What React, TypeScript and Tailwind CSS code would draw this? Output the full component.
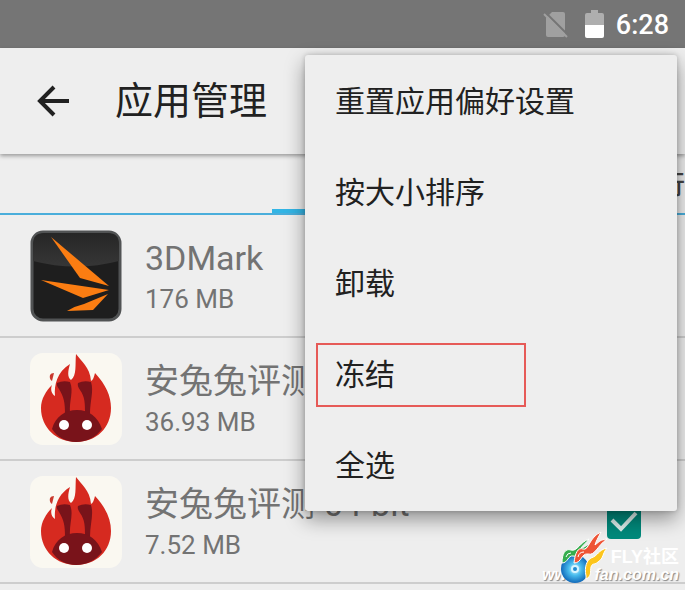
import React, { useState } from 'react';

const apps = [
  { id: 1, name: '3DMark', size: '176 MB', icon: '3dmark' },
  { id: 2, name: '安兔兔评测', size: '36.93 MB', icon: 'antutu' },
  { id: 3, name: '安兔兔评测 64-bit', size: '7.52 MB', icon: 'antutu' },
];

const menuItems = ['重置应用偏好设置', '按大小排序', '卸载', '冻结', '全选'];

function MarkIcon() {
  return (
    <svg className="size-[92px] shrink-0" viewBox="0 0 92 92" aria-hidden="true">
      <defs>
        <linearGradient id="markTop" x1="0" y1="0" x2="0" y2="1">
          <stop offset="0" stopColor="#262626" />
          <stop offset="1" stopColor="#363636" />
        </linearGradient>
      </defs>
      <rect x="2" y="2" width="88" height="88" rx="11" fill="#1e1e1e" stroke="#515354" strokeWidth="3" />
      <path d="M3 31V14Q3 3 14 3H78Q89 3 89 14V31Q46 42 3 31Z" fill="url(#markTop)" />
      <path d="M21 7L79 56L50 48Z" fill="#fb7d12" />
      <path d="M11 50L79 60L53 68Z" fill="#fb7d12" />
      <path d="M78 64L63 80L37 81Q45 76 54 74Z" fill="#fb7d12" />
    </svg>
  );
}

function AntutuIcon() {
  return (
    <svg className="size-[92px] shrink-0" viewBox="0 0 92 92" aria-hidden="true">
      <rect width="92" height="92" rx="13" fill="#faf8f1" />
      <path
        d="M46 1C51 8 60 14 61 28C63 27 64 24 65 20C76 32 81 43 81 55C81 75 66 89 46 89C27 89 11 75 11 55C11 46 16 38 22 32C20 37 22 41 25 43C24 32 27 19 40 11C38 18 37 24 41 27C47 22 45 12 46 1Z"
        fill="#d62a20"
      />
      <path d="M20 22Q21 20 24 20L22 28Q19 26 20 22Z" fill="#c9392e" />
      <path d="M27 30Q33 27 40 29C44 38 39 48 40 60H35C35 50 34 44 29 36Q26 32 27 30Z" fill="#79131a" />
      <path d="M48 30Q54 27 61 29C64 38 60 48 60 61H55C55 50 55 44 50 37Q47 33 48 30Z" fill="#79131a" />
      <path d="M22 76C25 64 35 57 47 57C59 57 68 64 72 76C66 84 57 89 46 89C36 89 27 84 22 76Z" fill="#79131a" />
      <circle cx="34" cy="72" r="5" fill="#fff" />
      <circle cx="57" cy="72" r="5" fill="#fff" />
    </svg>
  );
}

function StatusBar() {
  return (
    <div className="flex h-12 items-center justify-end bg-[#757575] pr-4 text-white">
      <svg className="mr-4 h-[30px] w-[26px]" viewBox="0 0 26 30" aria-hidden="true">
        <path d="M9 3H20Q22 3 22 5V26Q22 28 20 28H5Q3 28 3 26V9Z" fill="#a0a0a0" />
        <path d="M2 3L26 27" stroke="#757575" strokeWidth="2" />
        <path d="M1 5L24 28" stroke="#a0a0a0" strokeWidth="2" />
      </svg>
      <svg className="mr-3 h-7 w-[19px]" viewBox="0 0 19 28" aria-hidden="true">
        <path d="M6 0H13V3H17Q19 3 19 5V15H0V5Q0 3 2 3H6Z" fill="#aeaeae" />
        <path d="M0 15H19V26Q19 28 17 28H2Q0 28 0 26Z" fill="#fff" />
      </svg>
      <span className="pt-[2px] text-[27px] leading-8 font-medium">6:28</span>
    </div>
  );
}

function Watermark() {
  return (
    <div className="pointer-events-none absolute top-[532px] right-[6px] h-[53px] w-[137px] text-white">
      <div className="flex h-full flex-col items-end justify-end font-['Liberation_Sans','Noto_Sans_CJK_SC',sans-serif] font-bold">
        <div className="text-[18px] leading-4">FLY社区</div>
        <div className="flex w-full justify-between text-[16px] leading-5 italic [text-shadow:1px_1px_1px_#888]">
          <span>www.</span>
          <span>fan.com.cn</span>
        </div>
      </div>
      <svg className="absolute top-0 left-[18px] h-[54px] w-12" viewBox="0 0 48 54" aria-hidden="true">
        <defs>
          <radialGradient id="disc">
            <stop offset="0" stopColor="#e8fbff" />
            <stop offset="0.45" stopColor="#49bdee" />
            <stop offset="1" stopColor="#126aba" />
          </radialGradient>
        </defs>
        <circle cx="15" cy="37" r="14" fill="url(#disc)" />
        <path d="M2 31C2 22 5 16 11 18C17 20 20 10 29 7C26 11 23 13 21 16C26 15 27 12 33 11C22 17 20 26 13 24C8 23 8 31 2 31Z" fill="#35ad4e" stroke="#fff" />
        <path d="M26 44C24 35 27 28 31 26C38 24 38 18 47 16C42 22 44 26 38 30C33 34 33 30 31 35C30 40 32 44 26 47Z" fill="#fcc51c" stroke="#fff" />
        <path d="M14 31C15 21 18 15 23 17C29 19 29 5 41 0C38 6 36 9 35 13C40 9 40 8 47 7C37 14 35 24 28 22C21 21 22 31 14 31Z" fill="#ee5436" stroke="#fff" />
        <path d="M6 25Q7 21 11 21M18 25Q19 20 24 20" fill="none" stroke="#fff" />
        <circle cx="15" cy="37" r="4" fill="#d8f5ff" />
        <circle cx="15" cy="37" r="2" fill="#218bd0" />
      </svg>
    </div>
  );
}

export default function App() {
  const [selected, setSelected] = useState<number[]>([3]);

  const toggle = (id: number) => {
    setSelected(selected.includes(id) ? selected.filter((s) => s !== id) : [...selected, id]);
  };

  return (
    <div className="relative min-h-screen overflow-hidden bg-[#eeeeee] font-[Roboto,'Noto_Sans_CJK_SC',sans-serif]">
      <StatusBar />

      <header className="relative flex h-[106px] items-center bg-[#eeeeee] pl-9 shadow-[0_2px_4px_rgba(0,0,0,0.35)]">
        <button type="button" aria-label="返回" className="mr-[43px]">
          <svg className="size-9" viewBox="0 0 36 36" fill="none" stroke="#212121" strokeWidth="4" aria-hidden="true">
            <path d="M33 18H6M18 4L4 18L18 32" />
          </svg>
        </button>
        <h1 className="text-[38px] leading-[48px] text-[#212121]">应用管理</h1>
      </header>

      <nav className="flex h-[61px] justify-between border-b-2 border-[#4aaedb] pl-[272px] text-[26px] text-[#444]">
        <button type="button" aria-label="已下载" className="w-[140px] border-b-4 border-[#33b5e5]" />
        <button type="button" className="pt-1 font-medium">正在运行</button>
      </nav>

      <ul>
        {apps.map((app) => (
          <li key={app.id} className="flex h-[123px] items-center border-b-2 border-[#cdcdcd] pr-11 pl-[30px]">
            {app.icon === '3dmark' ? <MarkIcon /> : <AntutuIcon />}
            <label htmlFor={`app-${app.id}`} className="ml-[23px] flex-1 text-[#737373]">
              <span className="block text-[34px] leading-[46px]">{app.name}</span>
              <span className="block text-[26px] leading-9">{app.size}</span>
            </label>
            <div className="relative size-[34px]">
              <input
                id={`app-${app.id}`}
                type="checkbox"
                checked={selected.includes(app.id)}
                onChange={() => toggle(app.id)}
                className="peer block size-full appearance-none rounded-sm border-4 border-[#737373] checked:border-0 checked:bg-[#00897b]"
              />
              <svg className="pointer-events-none absolute inset-0 hidden peer-checked:block" viewBox="0 0 34 34" fill="none" stroke="#dceeeb" strokeWidth="4" aria-hidden="true">
                <path d="M5 15L14 24L29 8" />
              </svg>
            </div>
          </li>
        ))}
      </ul>

      <div className="absolute top-[55px] right-2 w-[372px] rounded-[3px] bg-[#eeeeee] pt-px shadow-[0_8px_20px_rgba(0,0,0,0.4),0_0_5px_rgba(0,0,0,0.2)]">
        {menuItems.map((item) => (
          <button key={item} type="button" className="flex h-[91px] w-full items-center px-[11px] text-left text-[30px] text-[#212121]">
            <span className={`flex h-16 items-center border-2 pl-[17px] ${item === '冻结' ? 'w-[210px] border-[#e65a57]' : 'border-transparent'}`}>
              {item}
            </span>
          </button>
        ))}
      </div>

      <Watermark />
    </div>
  );
}
